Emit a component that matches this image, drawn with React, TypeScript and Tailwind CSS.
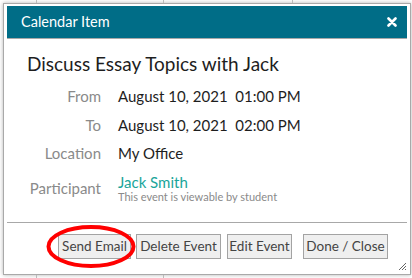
import React from "react";

function Row({ label, children, h = "h-[28.5px]" }: { label: string; children: React.ReactNode; h?: string }) {
  return (
    <div className={`flex items-center ${h}`}>
      <div className="w-[94px] text-right text-[15px] text-[#8a8a8a] leading-[18px]">{label}</div>
      <div className="ml-[17px] text-[15px] text-[#1e1e1e] leading-[18px] whitespace-pre">{children}</div>
    </div>
  );
}

export default function App() {
  return (
    <div className="relative w-[412px] h-[278px] overflow-hidden bg-white font-['Lato',sans-serif]">
      <div className="absolute left-[36px] top-0 h-[3px] w-px bg-[#bbb]" />
      <div className="absolute left-[163px] top-0 h-[3px] w-px bg-[#bbb]" />
      <div className="absolute left-[292px] top-0 h-[3px] w-px bg-[#bbb]" />
      <div className="absolute left-[36px] bottom-0 h-[3px] w-px bg-[#bbb]" />
      <div className="absolute left-[163px] bottom-0 h-[3px] w-px bg-[#bbb]" />
      <div className="pl-[3px] pt-[3px]">
        <div className="flex h-[272px] w-[408px] flex-col border border-[#a9a9a9] bg-white px-[3px] pb-[3px] pt-[2px] shadow-[0_0_4px_rgba(0,0,0,0.3)]">
          <div className="flex h-[33px] items-center justify-between border-b border-[#a8a8a8] bg-[#006d87] pl-[14px] pr-[10px] text-[14.5px] text-white">
            <span>Calendar Item</span>
            <svg width="10" height="10" viewBox="0 0 10 10">
              <path d="M1.5 1.5 L8.5 8.5 M8.5 1.5 L1.5 8.5" stroke="white" strokeWidth="2.6" strokeLinecap="round" />
            </svg>
          </div>
          <div className="pl-[20px] pt-[13px] text-[19px] leading-[23px] text-[#1e1e1e]">Discuss Essay Topics with Jack</div>
          <div className="mt-[7px]">
            <Row label="From">{"August 10, 2021  01:00 PM"}</Row>
            <Row label="To">{"August 10, 2021  02:00 PM"}</Row>
            <Row label="Location">My Office</Row>
            <div className="mt-[5px] flex items-center">
              <div className="w-[94px] text-right text-[15px] text-[#8a8a8a] leading-[18px]">Participant</div>
              <div className="ml-[17px] flex flex-col">
                <span className="text-[15px] leading-[18px] text-[#1aa59a]">Jack Smith</span>
                <span className="text-[11px] leading-[12px] text-[#8a8a8a]">This event is viewable by student</span>
              </div>
            </div>
          </div>
          <div className="relative mt-auto flex h-[49px] items-start justify-end border-t border-[#a8a8a8] pr-[19px] pt-[11px]">
            <div className="flex gap-[5px]">
              <button className="h-[25px] w-[73px] border border-[#a3a3a3] bg-[#efefef] text-[13.5px] text-[#444]">Send Email</button>
              <button className="h-[25px] w-[85px] border border-[#a3a3a3] bg-[#efefef] text-[13.5px] text-[#444]">Delete Event</button>
              <button className="ml-[1px] h-[25px] w-[65px] border border-[#a3a3a3] bg-[#efefef] text-[13.5px] text-[#444]">Edit Event</button>
            </div>
            <button className="ml-[11px] h-[25px] w-[85px] border border-[#a3a3a3] bg-[#efefef] text-[13.5px] text-[#444]">Done / Close</button>
            <svg className="absolute bottom-0 right-0" width="10" height="10" viewBox="0 0 10 10">
              <path d="M9 2 L2 9 M9 5 L5 9 M9 8 L8 9" stroke="#555" strokeWidth="0.9" />
            </svg>
          </div>
        </div>
      </div>
      <svg className="pointer-events-none absolute left-0 top-0" width="412" height="278">
        <ellipse cx="91" cy="246.5" rx="42.5" ry="19.5" fill="none" stroke="#f00" strokeWidth="4" />
      </svg>
    </div>
  );
}
